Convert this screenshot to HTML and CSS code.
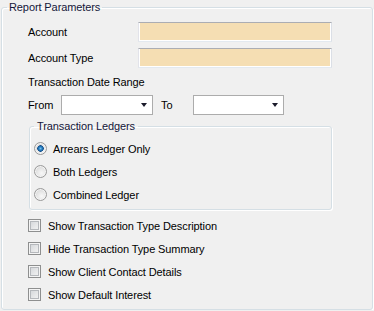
FILE: index.html
```html
<!DOCTYPE html>
<html lang="en">
<head>
    <meta charset="UTF-8">
    <meta name="viewport" content="width=device-width, initial-scale=1.0">
    <title>Report Parameters</title>
    <link rel="stylesheet" href="styles.css">
</head>
<body>
    <fieldset class="group outer">
      <legend>Report Parameters</legend>

      <div class="row first">
        <span class="label wide">Account</span>
        <span class="textbox"></span>
      </div>
      <div class="row">
        <span class="label wide">Account Type</span>
        <span class="textbox"></span>
      </div>

      <div class="caption">Transaction Date Range</div>

      <div class="row dates">
        <span class="label from">From</span>
        <span class="combo from-box"><i class="arrow"></i></span>
        <span class="label to">To</span>
        <span class="combo to-box"><i class="arrow"></i></span>
      </div>

      <fieldset class="group inner">
        <legend>Transaction Ledgers</legend>
        <div class="option first-opt"><span class="radio checked"></span>Arrears Ledger Only</div>
        <div class="option"><span class="radio"></span>Both Ledgers</div>
        <div class="option"><span class="radio"></span>Combined Ledger</div>
      </fieldset>

      <div class="checks">
        <div class="check"><span class="box"></span>Show Transaction Type Description</div>
        <div class="check"><span class="box"></span>Hide Transaction Type Summary</div>
        <div class="check"><span class="box"></span>Show Client Contact Details</div>
        <div class="check"><span class="box"></span>Show Default Interest</div>
      </div>
    </fieldset>
</body>
</html>
```

FILE: styles.css
```css
body {
  margin: 0;
  background: #f0f0f0;
  font-family: "Liberation Sans", Arial, sans-serif;
  font-size: 11px;
  letter-spacing: -0.1px;
  color: #000;
}

.group {
  margin: 0;
  border: 1px solid #d5dfe5;
  border-radius: 3px;
  box-shadow: inset 1px 1px 0 #fff, 1px 1px 0 #fff;
  min-width: 0;
}

.group legend {
  line-height: 15px;
  color: #14163a;
}

.outer {
  margin-left: 1px;
  width: 372px;
  box-sizing: border-box;
  padding: 0 5px 3px 5px;
}

.outer > legend {
  padding: 0 2px;
}

.row {
  display: flex;
  align-items: center;
  height: 20px;
  margin-top: 6px;
  padding-left: 21px;
}

.row.first {
  margin-top: 7px;
}

.label.wide {
  width: 110px;
}

.textbox {
  box-sizing: border-box;
  width: 194px;
  height: 20px;
  background: #f5deb3;
  border: 1px solid;
  border-color: #abadb3 #dbdfe6 #e3e9ef #e2e3ea;
  box-shadow: inset 1px -1px 0 #fff, inset -1px 0 0 #fff;
}

.caption {
  margin-top: 8px;
  padding-left: 21px;
  line-height: 13px;
}

.dates {
  margin-top: 6px;
}

.label.from {
  width: 33px;
}

.label.to {
  width: 32px;
  margin-left: 8px;
}

.combo {
  position: relative;
  box-sizing: border-box;
  height: 20px;
  background: #fff;
  border: 1px solid #acacac;
}

.from-box {
  width: 92px;
}

.to-box {
  width: 91px;
}

.arrow {
  position: absolute;
  right: 5px;
  top: 7px;
  width: 0;
  height: 0;
  border-left: 3.5px solid transparent;
  border-right: 3.5px solid transparent;
  border-top: 4px solid #1b1b2b;
}

.inner {
  margin: 4px 0 0 22px;
  width: 303px;
  box-sizing: border-box;
  padding: 0 4px 3px 4px;
}

.inner > legend {
  padding: 0 3px;
}

.option {
  display: flex;
  align-items: center;
  height: 23px;
}

.first-opt {
  margin-top: 3px;
}

.radio {
  box-sizing: border-box;
  width: 13px;
  height: 13px;
  margin-right: 6px;
  border-radius: 50%;
  border: 1px solid #9a9a9a;
  background: radial-gradient(circle at 60% 65%, #f8f8f8 0%, #e6e6e6 45%, #c9c9c9 100%);
  box-shadow: inset 0 0 0 1px #f4f4f4;
}

.radio.checked {
  background:
    radial-gradient(circle at 50% 50%, #7fc3ee 0, #2a86c8 1.5px, #17518c 3px, transparent 3.5px),
    radial-gradient(circle at 60% 65%, #f8f8f8 0%, #e6e6e6 45%, #c9c9c9 100%);
}

.checks {
  margin-top: 4px;
  padding-left: 21px;
}

.check {
  display: flex;
  align-items: center;
  height: 23px;
}

.box {
  box-sizing: border-box;
  width: 13px;
  height: 13px;
  margin-right: 7px;
  border: 1px solid #8e8f8f;
  background: linear-gradient(135deg, #cfd2d6 0%, #e8e9ea 60%, #f6f6f6 100%);
  box-shadow: inset 0 0 0 1px #f4f4f4, inset 0 0 0 2px #b5b8bc;
}
```
